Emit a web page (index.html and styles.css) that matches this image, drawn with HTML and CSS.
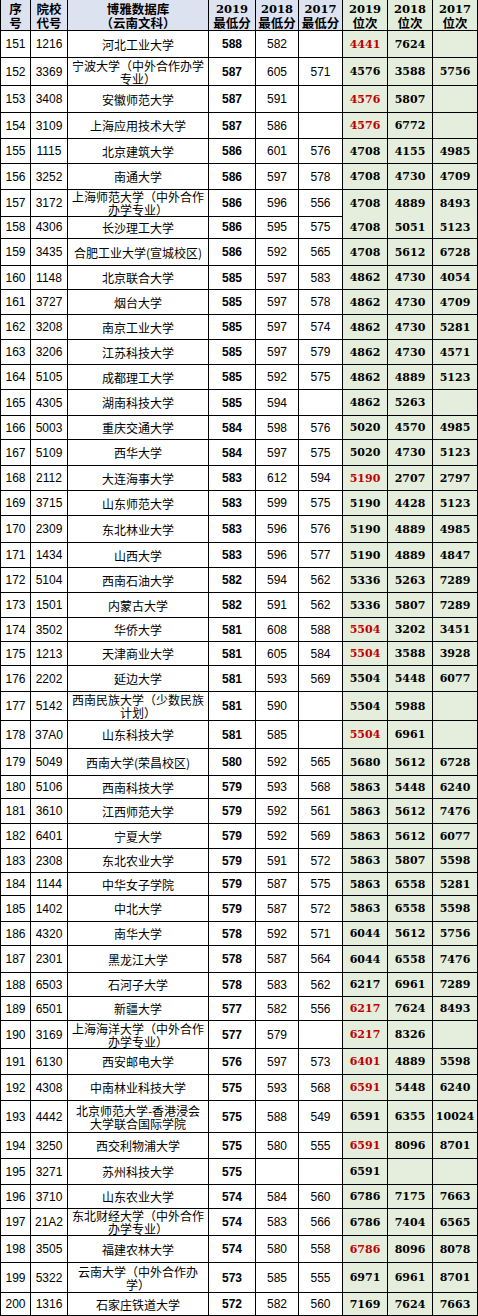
FILE: index.html
```html
<!DOCTYPE html>
<html lang="zh">
<head>
<meta charset="utf-8">
<title>博雅数据库（云南文科）</title>
<link rel="stylesheet" href="styles.css">
</head>
<body>
<div class="sheet">
  <div class="row head">
    <div class="c hd"><span>序</span><span>号</span></div>
    <div class="c hd"><span>院校</span><span>代号</span></div>
    <div class="c hd"><span>博雅数据库</span><span>（云南文科）</span></div>
    <div class="c hd"><span class="hy">2019</span><span>最低分</span></div>
    <div class="c hd"><span class="hy">2018</span><span>最低分</span></div>
    <div class="c hd"><span class="hy">2017</span><span>最低分</span></div>
    <div class="c hd g"><span class="hy">2019</span><span>位次</span></div>
    <div class="c hd g"><span class="hy">2018</span><span>位次</span></div>
    <div class="c hd g"><span class="hy">2017</span><span>位次</span></div>
  </div>
  <div class="row h27"><div class="c n">151</div><div class="c n">1216</div><div class="c nm">河北工业大学</div><div class="c s">588</div><div class="c n">582</div><div class="c n"></div><div class="c r red">4441</div><div class="c r">7624</div><div class="c r"></div></div>
  <div class="row h28"><div class="c n">152</div><div class="c n">3369</div><div class="c nm">宁波大学（中外合作办学专业）</div><div class="c s">587</div><div class="c n">605</div><div class="c n">571</div><div class="c r">4576</div><div class="c r">3588</div><div class="c r">5756</div></div>
  <div class="row h27"><div class="c n">153</div><div class="c n">3408</div><div class="c nm">安徽师范大学</div><div class="c s">587</div><div class="c n">591</div><div class="c n"></div><div class="c r red">4576</div><div class="c r">5807</div><div class="c r"></div></div>
  <div class="row h26"><div class="c n">154</div><div class="c n">3109</div><div class="c nm">上海应用技术大学</div><div class="c s">587</div><div class="c n">586</div><div class="c n"></div><div class="c r red">4576</div><div class="c r">6772</div><div class="c r"></div></div>
  <div class="row h25"><div class="c n">155</div><div class="c n">1115</div><div class="c nm">北京建筑大学</div><div class="c s">586</div><div class="c n">601</div><div class="c n">576</div><div class="c r">4708</div><div class="c r">4155</div><div class="c r">4985</div></div>
  <div class="row h26"><div class="c n">156</div><div class="c n">3252</div><div class="c nm">南通大学</div><div class="c s">586</div><div class="c n">597</div><div class="c n">578</div><div class="c r">4708</div><div class="c r">4730</div><div class="c r">4709</div></div>
  <div class="row h26"><div class="c n">157</div><div class="c n">3172</div><div class="c nm">上海师范大学（中外合作办学专业）</div><div class="c s">586</div><div class="c n">596</div><div class="c n">556</div><div class="c r">4708</div><div class="c r">4889</div><div class="c r">8493</div></div>
  <div class="row h23"><div class="c n">158</div><div class="c n">4306</div><div class="c nm">长沙理工大学</div><div class="c s">586</div><div class="c n">595</div><div class="c n">575</div><div class="c r">4708</div><div class="c r">5051</div><div class="c r">5123</div></div>
  <div class="row h27"><div class="c n">159</div><div class="c n">3435</div><div class="c nm">合肥工业大学(宣城校区)</div><div class="c s">586</div><div class="c n">592</div><div class="c n">565</div><div class="c r">4708</div><div class="c r">5612</div><div class="c r">6728</div></div>
  <div class="row h24"><div class="c n">160</div><div class="c n">1148</div><div class="c nm">北京联合大学</div><div class="c s">585</div><div class="c n">597</div><div class="c n">583</div><div class="c r">4862</div><div class="c r">4730</div><div class="c r">4054</div></div>
  <div class="row h25"><div class="c n">161</div><div class="c n">3727</div><div class="c nm">烟台大学</div><div class="c s">585</div><div class="c n">597</div><div class="c n">578</div><div class="c r">4862</div><div class="c r">4730</div><div class="c r">4709</div></div>
  <div class="row h25"><div class="c n">162</div><div class="c n">3208</div><div class="c nm">南京工业大学</div><div class="c s">585</div><div class="c n">597</div><div class="c n">574</div><div class="c r">4862</div><div class="c r">4730</div><div class="c r">5281</div></div>
  <div class="row h25"><div class="c n">163</div><div class="c n">3206</div><div class="c nm">江苏科技大学</div><div class="c s">585</div><div class="c n">597</div><div class="c n">579</div><div class="c r">4862</div><div class="c r">4730</div><div class="c r">4571</div></div>
  <div class="row h25"><div class="c n">164</div><div class="c n">5105</div><div class="c nm">成都理工大学</div><div class="c s">585</div><div class="c n">592</div><div class="c n">575</div><div class="c r">4862</div><div class="c r">4889</div><div class="c r">5123</div></div>
  <div class="row h26"><div class="c n">165</div><div class="c n">4305</div><div class="c nm">湖南科技大学</div><div class="c s">585</div><div class="c n">594</div><div class="c n"></div><div class="c r">4862</div><div class="c r">5263</div><div class="c r"></div></div>
  <div class="row h24"><div class="c n">166</div><div class="c n">5003</div><div class="c nm">重庆交通大学</div><div class="c s">584</div><div class="c n">598</div><div class="c n">576</div><div class="c r">5020</div><div class="c r">4570</div><div class="c r">4985</div></div>
  <div class="row h26"><div class="c n">167</div><div class="c n">5109</div><div class="c nm">西华大学</div><div class="c s">584</div><div class="c n">597</div><div class="c n">575</div><div class="c r">5020</div><div class="c r">4730</div><div class="c r">5123</div></div>
  <div class="row h25"><div class="c n">168</div><div class="c n">2112</div><div class="c nm">大连海事大学</div><div class="c s">583</div><div class="c n">612</div><div class="c n">594</div><div class="c r red">5190</div><div class="c r">2707</div><div class="c r">2797</div></div>
  <div class="row h25"><div class="c n">169</div><div class="c n">3715</div><div class="c nm">山东师范大学</div><div class="c s">583</div><div class="c n">599</div><div class="c n">575</div><div class="c r">5190</div><div class="c r">4428</div><div class="c r">5123</div></div>
  <div class="row h27"><div class="c n">170</div><div class="c n">2309</div><div class="c nm">东北林业大学</div><div class="c s">583</div><div class="c n">596</div><div class="c n">576</div><div class="c r">5190</div><div class="c r">4889</div><div class="c r">4985</div></div>
  <div class="row h25"><div class="c n">171</div><div class="c n">1434</div><div class="c nm">山西大学</div><div class="c s">583</div><div class="c n">596</div><div class="c n">577</div><div class="c r">5190</div><div class="c r">4889</div><div class="c r">4847</div></div>
  <div class="row h25"><div class="c n">172</div><div class="c n">5104</div><div class="c nm">西南石油大学</div><div class="c s">582</div><div class="c n">594</div><div class="c n">562</div><div class="c r">5336</div><div class="c r">5263</div><div class="c r">7289</div></div>
  <div class="row h25"><div class="c n">173</div><div class="c n">1501</div><div class="c nm">内蒙古大学</div><div class="c s">582</div><div class="c n">591</div><div class="c n">562</div><div class="c r">5336</div><div class="c r">5807</div><div class="c r">7289</div></div>
  <div class="row h24"><div class="c n">174</div><div class="c n">3502</div><div class="c nm">华侨大学</div><div class="c s">581</div><div class="c n">608</div><div class="c n">588</div><div class="c r red">5504</div><div class="c r">3202</div><div class="c r">3451</div></div>
  <div class="row h24"><div class="c n">175</div><div class="c n">1213</div><div class="c nm">天津商业大学</div><div class="c s">581</div><div class="c n">605</div><div class="c n">584</div><div class="c r red">5504</div><div class="c r">3588</div><div class="c r">3928</div></div>
  <div class="row h26"><div class="c n">176</div><div class="c n">2202</div><div class="c nm">延边大学</div><div class="c s">581</div><div class="c n">593</div><div class="c n">569</div><div class="c r">5504</div><div class="c r">5448</div><div class="c r">6077</div></div>
  <div class="row h29"><div class="c n">177</div><div class="c n">5142</div><div class="c nm">西南民族大学（少数民族计划）</div><div class="c s">581</div><div class="c n">590</div><div class="c n"></div><div class="c r">5504</div><div class="c r">5988</div><div class="c r"></div></div>
  <div class="row h28"><div class="c n">178</div><div class="c n">37A0</div><div class="c nm">山东科技大学</div><div class="c s">581</div><div class="c n">585</div><div class="c n"></div><div class="c r red">5504</div><div class="c r">6961</div><div class="c r"></div></div>
  <div class="row h27"><div class="c n">179</div><div class="c n">5049</div><div class="c nm">西南大学(荣昌校区)</div><div class="c s">580</div><div class="c n">592</div><div class="c n">565</div><div class="c r">5680</div><div class="c r">5612</div><div class="c r">6728</div></div>
  <div class="row h23"><div class="c n">180</div><div class="c n">5106</div><div class="c nm">西南科技大学</div><div class="c s">579</div><div class="c n">593</div><div class="c n">568</div><div class="c r">5863</div><div class="c r">5448</div><div class="c r">6240</div></div>
  <div class="row h25"><div class="c n">181</div><div class="c n">3610</div><div class="c nm">江西师范大学</div><div class="c s">579</div><div class="c n">592</div><div class="c n">561</div><div class="c r">5863</div><div class="c r">5612</div><div class="c r">7476</div></div>
  <div class="row h25"><div class="c n">182</div><div class="c n">6401</div><div class="c nm">宁夏大学</div><div class="c s">579</div><div class="c n">592</div><div class="c n">569</div><div class="c r">5863</div><div class="c r">5612</div><div class="c r">6077</div></div>
  <div class="row h24"><div class="c n">183</div><div class="c n">2308</div><div class="c nm">东北农业大学</div><div class="c s">579</div><div class="c n">591</div><div class="c n">572</div><div class="c r">5863</div><div class="c r">5807</div><div class="c r">5598</div></div>
  <div class="row h23"><div class="c n">184</div><div class="c n">1144</div><div class="c nm">中华女子学院</div><div class="c s">579</div><div class="c n">587</div><div class="c n">575</div><div class="c r">5863</div><div class="c r">6558</div><div class="c r">5281</div></div>
  <div class="row h26"><div class="c n">185</div><div class="c n">1402</div><div class="c nm">中北大学</div><div class="c s">579</div><div class="c n">587</div><div class="c n">572</div><div class="c r">5863</div><div class="c r">6558</div><div class="c r">5598</div></div>
  <div class="row h24"><div class="c n">186</div><div class="c n">4320</div><div class="c nm">南华大学</div><div class="c s">578</div><div class="c n">592</div><div class="c n">571</div><div class="c r">6044</div><div class="c r">5612</div><div class="c r">5756</div></div>
  <div class="row h27"><div class="c n">187</div><div class="c n">2301</div><div class="c nm">黑龙江大学</div><div class="c s">578</div><div class="c n">587</div><div class="c n">564</div><div class="c r">6044</div><div class="c r">6558</div><div class="c r">7476</div></div>
  <div class="row h24"><div class="c n">188</div><div class="c n">6503</div><div class="c nm">石河子大学</div><div class="c s">578</div><div class="c n">583</div><div class="c n">562</div><div class="c r">6217</div><div class="c r">6961</div><div class="c r">7289</div></div>
  <div class="row h24"><div class="c n">189</div><div class="c n">6501</div><div class="c nm">新疆大学</div><div class="c s">577</div><div class="c n">582</div><div class="c n">556</div><div class="c r red">6217</div><div class="c r">7624</div><div class="c r">8493</div></div>
  <div class="row h28"><div class="c n">190</div><div class="c n">3169</div><div class="c nm">上海海洋大学（中外合作办学专业）</div><div class="c s">577</div><div class="c n">579</div><div class="c n"></div><div class="c r red">6217</div><div class="c r">8326</div><div class="c r"></div></div>
  <div class="row h26"><div class="c n">191</div><div class="c n">6130</div><div class="c nm">西安邮电大学</div><div class="c s">576</div><div class="c n">597</div><div class="c n">573</div><div class="c r red">6401</div><div class="c r">4889</div><div class="c r">5598</div></div>
  <div class="row h26"><div class="c n">192</div><div class="c n">4308</div><div class="c nm">中南林业科技大学</div><div class="c s">575</div><div class="c n">593</div><div class="c n">568</div><div class="c r red">6591</div><div class="c r">5448</div><div class="c r">6240</div></div>
  <div class="row h32"><div class="c n">193</div><div class="c n">4442</div><div class="c nm">北京师范大学-香港浸会大学联合国际学院</div><div class="c s">575</div><div class="c n">588</div><div class="c n">549</div><div class="c r">6591</div><div class="c r">6355</div><div class="c r">10024</div></div>
  <div class="row h26"><div class="c n">194</div><div class="c n">3250</div><div class="c nm">西交利物浦大学</div><div class="c s">575</div><div class="c n">580</div><div class="c n">555</div><div class="c r red">6591</div><div class="c r">8096</div><div class="c r">8701</div></div>
  <div class="row h26"><div class="c n">195</div><div class="c n">3271</div><div class="c nm">苏州科技大学</div><div class="c s">575</div><div class="c n"></div><div class="c n"></div><div class="c r">6591</div><div class="c r"></div><div class="c r"></div></div>
  <div class="row h24"><div class="c n">196</div><div class="c n">3710</div><div class="c nm">山东农业大学</div><div class="c s">574</div><div class="c n">584</div><div class="c n">560</div><div class="c r">6786</div><div class="c r">7175</div><div class="c r">7663</div></div>
  <div class="row h27"><div class="c n">197</div><div class="c n">21A2</div><div class="c nm">东北财经大学（中外合作办学专业）</div><div class="c s">574</div><div class="c n">583</div><div class="c n">566</div><div class="c r">6786</div><div class="c r">7404</div><div class="c r">6565</div></div>
  <div class="row h27"><div class="c n">198</div><div class="c n">3505</div><div class="c nm">福建农林大学</div><div class="c s">574</div><div class="c n">580</div><div class="c n">558</div><div class="c r red">6786</div><div class="c r">8096</div><div class="c r">8078</div></div>
  <div class="row h30"><div class="c n">199</div><div class="c n">5322</div><div class="c nm">云南大学（中外合作办学）</div><div class="c s">573</div><div class="c n">585</div><div class="c n">555</div><div class="c r">6971</div><div class="c r">6961</div><div class="c r">8701</div></div>
  <div class="row h23"><div class="c n">200</div><div class="c n">1316</div><div class="c nm">石家庄铁道大学</div><div class="c s">572</div><div class="c n">582</div><div class="c n">560</div><div class="c r">7169</div><div class="c r">7624</div><div class="c r">7663</div></div>
</div>
</body>
</html>
```

FILE: styles.css
```css
html, body {
  margin: 0;
  padding: 0;
  background: #ffffff;
}
.sheet {
  width: 478px;
  font-family: "Noto Sans CJK SC", "Liberation Sans", sans-serif;
  color: #000;
}
.row {
  display: grid;
  grid-template-columns: 31px 37px 141px 47px 43px 44px 45px 45px 45px;
}
.c {
  box-sizing: border-box;
  border-right: 1px solid #000;
  border-bottom: 1px solid #000;
  display: flex;
  align-items: center;
  justify-content: center;
  text-align: center;
  overflow: hidden;
}
.row > .c:first-child {
  border-left: 1px solid #000;
}
.head {
  height: 31px;
}
.hd {
  background: #dde2f1;
  font-weight: bold;
  font-size: 12.5px;
  line-height: 14px;
  flex-direction: column;
  justify-content: flex-start;
  padding-top: 2px;
  white-space: nowrap;
  overflow: visible;
}
.hd > span {
  display: block;
  height: 14px;
}
.hd.g {
  background: #e3eddb;
}
.hy {
  font-family: "DejaVu Serif", "Liberation Serif", serif;
  font-size: 11.5px;
  font-weight: bold;
}
.n {
  font-family: "Liberation Sans", "Noto Sans CJK SC", sans-serif;
  font-size: 12px;
}
.nm {
  font-size: 12px;
  line-height: 13px;
  padding: 0 3px;
  overflow: visible;
}
.s {
  font-family: "Liberation Sans", sans-serif;
  font-weight: bold;
  font-size: 12px;
}
.r {
  background: #e5eedc;
  font-family: "DejaVu Serif", "Liberation Serif", serif;
  font-weight: bold;
  font-size: 11px;
}
.red {
  color: #c00000;
}
.h23 { height: 23px; }
.h24 { height: 24px; }
.h25 { height: 25px; }
.h26 { height: 26px; }
.h27 { height: 27px; }
.h28 { height: 28px; }
.h29 { height: 29px; }
.h30 { height: 30px; }
.h32 { height: 32px; }
```
